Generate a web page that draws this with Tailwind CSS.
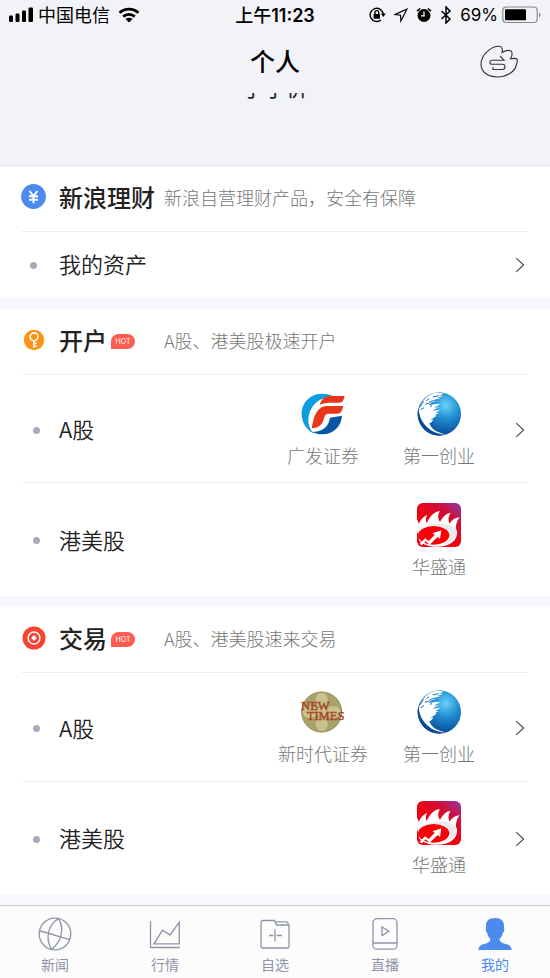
<!DOCTYPE html>
<html lang="zh-CN">
<head>
<meta charset="utf-8">
<meta name="viewport" content="width=device-width, initial-scale=1">
<title>个人</title>
<script src="https://cdn.jsdelivr.net/npm/@tailwindcss/browser@4"></script>
</head>
<body class="flex min-h-screen flex-col bg-[#f7f8fd] font-['Noto_Sans_CJK_SC',sans-serif] text-[#222]">

<!-- Shared symbols -->
<svg class="absolute size-0" aria-hidden="true">
  <symbol id="chevron" viewBox="0 0 10 16"><path d="M1.200 1.200 8.600 8l-7.400 6.800" fill="none" stroke="#444" stroke-width="1.100"/></symbol>
  <symbol id="gf" viewBox="0 0 132 126">
    <path d="M62 2C25 3 0 32 2 66c2 28 18 48 38 56C20 106 16 72 31 47 44 25 64 13 95 9 85 4 74 2 62 2Z" fill="#0a9de0"/>
    <path d="M34 117c12 0 24-3 33-9 12-7 17-20 20-34l36-6c-2 32-26 56-59 56-11 0-21-2-30-7Z" fill="#0757a5"/>
    <path d="M131 9c-4 15-7 20-16 20H86c-15 0-22 3-30 6C61 20 70 10 88 9Z" fill="#e9341c"/>
    <path d="M127 39c-4 16-8 23-18 23H84c-11 0-13 6-16 17-5 18-14 25-36 27 4-26 11-49 24-59 8-7 15-8 25-8Z" fill="#ea371c"/>
  </symbol>
  <symbol id="globe" viewBox="0 0 132 132">
    <circle cx="67" cy="66" r="65" fill="url(#sphere)"/>
    <path d="M70 3C54 1 38 7 24 20 12 32 5 45 6 63c1 28 21 53 49 62 12 4 22 4 31 2-24-4-42-14-49-33 7-2 9-7 12-11-4-1-6 1-9 1 8-7 13-8 19-13l-6-1 12-7-9-1c5-4 10-5 14-9l-14 2-9 2c7-8 14-7 20-11l-15 1c6-6 13-6 18-10l-14-1-20 3c4-9 13-9 19-12l-8-2 24-7-10-1 17-5-11-2 14-5Z" fill="#fff"/>
    <path d="M8 46 20 28m-9 25 10-6M24 37l13-4M28 26l8-6m0 11 14-6M47 15l18-4M39 43l6-2" fill="none" stroke="#1875b8" stroke-width="3"/>
    <path d="M2 58c-3 37 25 72 64 72l20-3C45 128 12 97 6 61Z" fill="#084b9b"/>
  </symbol>
  <symbol id="hst" viewBox="0 0 132 132">
    <rect width="132" height="132" rx="17" fill="url(#flame)"/>
    <path d="M0 50c4 5 4 9 5 13C11 51 18 40 31 36c-6 9-5 18-2 24 9-17 18-33 40-36-8 12-6 24 0 33 7-14 17-26 32-28-8 13-8 22-3 33 6-10 15-18 30-19-7 9-9 15-11 26-1 6 0 9 3 15 3 28-20 45-55 47-25 1-45-5-58-18L0 82Z" fill="#fff"/>
    <path d="M33 68c35-10 70-7 82 9 12 21-11 42-38 46 21-10 26-24 17-35-9-13-37-19-61-20Z" fill="#e9e9ee"/>
    <ellipse cx="50" cy="97" rx="47" ry="28" fill="#f70008"/>
    <path d="m8 122 16-16 11 8 18-18-6-5 26-9-4 26-7-6-24 23-12-10-12 12Z" fill="#fff"/>
  </symbol>
  <defs>
    <radialGradient id="sphere" cx=".65" cy=".3" r=".75"><stop offset="0" stop-color="#6cd0fb"/><stop offset=".4" stop-color="#2190d2"/><stop offset="1" stop-color="#053f91"/></radialGradient>
    <linearGradient id="flame" x1="1" y1="0" x2=".5" y2=".6"><stop offset="0" stop-color="#8b3aa8"/><stop offset=".5" stop-color="#d20d35"/><stop offset="1" stop-color="#f20010"/></linearGradient>
  </defs>
</svg>

<header class="bg-[#f2f3f7] text-black">
  <div class="grid h-[30px] grid-cols-[1fr_auto_1fr] items-center px-2 text-[18px] leading-[26px]">
    <div class="flex items-center">
      <svg class="h-4 w-[26px]" viewBox="0 0 26 16" aria-label="信号"><rect x="1" y="8.500" width="4" height="6.500" rx="1.200"/><rect x="7.500" y="6.500" width="4" height="8.500" rx="1.200"/><rect x="14" y="3.500" width="4" height="11.500" rx="1.200"/><rect x="20.500" y="0.500" width="4.500" height="14.500" rx="1.200"/></svg>
      <span class="ml-1 pb-[3px]">中国电信</span>
      <svg class="ml-2 h-4 w-[22px]" viewBox="0 0 22 16" fill="none" stroke="#000" stroke-width="2.800" aria-label="无线网络"><path d="M1.500 5.800a14 14 0 0 1 19 0M5.200 9.600a8.600 8.600 0 0 1 11.600 0"/><path d="m11 15.500-3.600-3.400a5.300 5.300 0 0 1 7.200 0Z" fill="#000" stroke="none"/></svg>
    </div>
    <div class="pb-px font-medium">上午<span class="font-['Inter'] font-semibold">11:23</span></div>
    <div class="flex items-center justify-end">
      <svg class="h-4 w-[17px]" viewBox="0 0 17 16" fill="none" stroke="#000" stroke-width="1.400" aria-label="方向锁定"><path d="M14.300 7A6.600 6.600 0 1 0 12 13"/><path d="M11.800 6.500h5l-2.500 3.400Z" fill="#000" stroke="none"/><rect x="4.600" y="7" width="6.400" height="4.800" rx=".6" fill="#000" stroke="none"/><path d="M5.900 7V5.500a1.900 1.900 0 0 1 3.800 0V7"/></svg>
      <svg class="ml-2 h-4 w-[14px]" viewBox="0 0 14 16" fill="none" stroke="#000" stroke-width="1.200" aria-label="定位"><path d="M13 2 .9 7.600l5.600.6.400 5.800Z"/></svg>
      <svg class="ml-2 h-4 w-4" viewBox="0 0 16 16" aria-label="闹钟"><circle cx="8" cy="8.500" r="6.500"/><path d="M1 4.200 4.200 1.500M15 4.200l-3.200-2.700" stroke="#000" stroke-width="1.600"/><path d="M8 4.500v4.300H5" fill="none" stroke="#fff" stroke-width="1.300"/></svg>
      <svg class="ml-2 h-[18px] w-3" viewBox="0 0 12 18" fill="none" stroke="#000" stroke-width="1.500" aria-label="蓝牙"><path d="m1.500 5 8.500 8-4 4V1l4 4-8.500 8"/></svg>
      <span class="ml-2 font-['Inter'] text-[17px]">69%</span>
      <svg class="ml-1 h-[18px] w-10" viewBox="0 0 40 18" aria-label="电池"><rect x=".8" y="1" width="34.400" height="15.500" rx="3.500" fill="none" stroke="#888" stroke-width="1.200"/><rect x="3" y="3.200" width="21" height="11" rx="1"/><path d="M37 6.500c2 .8 2 4 0 4.800Z" fill="#888"/></svg>
    </div>
  </div>
  <div class="grid h-[63px] grid-cols-[1fr_auto_1fr] items-center px-8">
    <span></span>
    <h1 class="pb-[3px] text-[25px] leading-[25px] font-medium">个人</h1>
    <button type="button" aria-label="消息" class="justify-self-end">
      <svg class="h-[34px] w-[38px]" viewBox="0 0 38 34" fill="none" stroke="#333" stroke-width="1.100"><path d="M22 7.500c.7-2.200.3-5.500-1.600-6C14 .1 1 7.800 1 19.500 1 27 8 32 17.500 32 26 32 34.500 27 36 21c.5-2.400 2-4 1-6.800-1.200-1.500-4-.6-6.500-.4 1.700-3 2-6.400.3-8.100-2.700-.9-6 .2-8.800 1.800Z"/><path d="m20 11 4 4.200H12c-2.800 0-2.800 4 0 4h10.500c3.300 0 3.300 5.300 0 5.300H13V22"/></svg>
    </button>
  </div>
</header>

<!-- Profile name, scrolled mostly under the header -->
<div class="h-[73px] border-b border-[#e6e7ef] bg-[#f2f3f7]">
  <div class="flex h-[7px] items-end justify-center overflow-hidden text-[22px] leading-[28px]"><p>于于价</p></div>
</div>

<main class="flex flex-1 flex-col gap-[11px]">
  <section class="bg-white px-[22px]">
    <div class="flex h-[66px] items-center border-b border-[#ebecf3] pb-1">
      <svg class="size-6 shrink-0 overflow-visible" viewBox="0 0 24 24" aria-hidden="true"><circle cx="11.500" cy="11.500" r="12.400" fill="#4c8bee"/><path d="m7.500 6 4 4.800 4-4.800m-4 4.800v7.400M7 11.200h9m-9 3.500h9" fill="none" stroke="#fff" stroke-width="1.900"/></svg>
      <div class="ml-[13px] w-[105px] shrink-0"><h2 class="text-[24px] leading-[34px] font-medium">新浪理财</h2></div>
      <p class="text-[18px] leading-[26px] font-light text-[#777]">新浪自营理财产品，安全有保障</p>
    </div>
    <a href="#assets" class="flex h-[66px] items-center">
      <span class="ml-2 mr-[22px] size-[7px] rounded-full bg-[#a6abbb]"></span>
      <span class="flex-1 pb-1 text-[22px] leading-[32px] font-[350]">我的资产</span>
      <svg class="mr-[3px] h-4 w-[10px]"><use href="#chevron"/></svg>
    </a>
  </section>

  <section class="bg-white px-[22px]">
    <div class="flex h-[66px] items-center border-b border-[#ebecf3] pb-1">
      <svg class="size-6 shrink-0" viewBox="0 0 24 24" aria-hidden="true"><circle cx="12" cy="12" r="10.200" fill="#fd9417"/><g fill="none" stroke="#fff" stroke-width="1.600"><circle cx="12" cy="8.800" r="3.900"/><path d="M12 12.700v7M12 15.300h2.800M12 18.200h2.800"/></g></svg>
      <div class="ml-[13px] flex w-[105px] shrink-0 items-center gap-1"><h2 class="text-[24px] leading-[34px] font-medium">开户</h2><span class="mt-1 h-[15px] w-6 rounded-t-full rounded-br-full bg-[#fd5d50] text-center font-['Inter'] text-[7px] leading-[15px] text-white">HOT</span></div>
      <p class="text-[18px] leading-[26px] font-light text-[#777]">A股、港美股极速开户</p>
    </div>
    <a href="#open-a" class="flex h-[108px] items-center border-b border-[#ebecf3] pt-[3px]">
      <span class="ml-[11px] mr-[19px] size-[7px] rounded-full bg-[#a6abbb]"></span>
      <span class="flex-1 pb-1 text-[22px] leading-[32px] font-[350]">A股</span>
      <span class="flex w-[116px] flex-col items-center gap-[6px] text-[18px] leading-[26px] font-light text-[#777]"><svg class="size-[44px]"><use href="#gf"/></svg>广发证券</span>
      <span class="flex w-[116px] flex-col items-center gap-[6px] text-[18px] leading-[26px] font-light text-[#777]"><svg class="size-[44px]"><use href="#globe"/></svg>第一创业</span>
      <svg class="ml-[18px] mr-[3px] h-4 w-[10px]"><use href="#chevron"/></svg>
    </a>
    <a href="#open-hk" class="flex h-[113px] items-center pt-[2px]">
      <span class="ml-[11px] mr-[19px] size-[7px] rounded-full bg-[#a6abbb]"></span>
      <span class="flex-1 pb-1 text-[22px] leading-[32px] font-[350]">港美股</span>
      <span class="mr-[31px] flex w-[116px] flex-col items-center gap-[6px] text-[18px] leading-[26px] font-light text-[#777]"><svg class="size-[44px]"><use href="#hst"/></svg>华盛通</span>
    </a>
  </section>

  <section class="bg-white px-[22px]">
    <div class="flex h-[66px] items-center border-b border-[#ebecf3] pb-1">
      <svg class="size-6 shrink-0" viewBox="0 0 24 24" aria-hidden="true"><circle cx="12" cy="12" r="11.500" fill="#fb4130"/><circle cx="12" cy="12" r="5.900" fill="none" stroke="#fff" stroke-width="1.500"/><path d="m12 9.100 2.900 2.900-2.900 2.900L9.100 12Z" fill="#fff"/></svg>
      <div class="ml-[13px] flex w-[105px] shrink-0 items-center gap-1"><h2 class="text-[24px] leading-[34px] font-medium">交易</h2><span class="mt-1 h-[15px] w-6 rounded-t-full rounded-br-full bg-[#fd5d50] text-center font-['Inter'] text-[7px] leading-[15px] text-white">HOT</span></div>
      <p class="text-[18px] leading-[26px] font-light text-[#777]">A股、港美股速来交易</p>
    </div>
    <a href="#trade-a" class="flex h-[109px] items-center border-b border-[#ebecf3] pt-[2px]">
      <span class="ml-[11px] mr-[19px] size-[7px] rounded-full bg-[#a6abbb]"></span>
      <span class="flex-1 pb-[2px] text-[22px] leading-[32px] font-[350]">A股</span>
      <span class="flex w-[116px] flex-col items-center gap-[6px] text-[18px] leading-[26px] font-light text-[#777]">
        <svg class="size-[44px] overflow-visible" viewBox="0 0 132 132">
          <circle cx="62" cy="66" r="60" fill="#aaa26b"/>
          <g fill="#c9c18e" stroke="#989057" stroke-width="2">
            <ellipse cx="62" cy="30" rx="20" ry="24"/><ellipse cx="62" cy="102" rx="20" ry="24"/>
            <ellipse cx="27" cy="66" rx="24" ry="20"/><ellipse cx="97" cy="66" rx="24" ry="20"/>
            <circle cx="62" cy="66" r="17"/>
          </g>
          <circle cx="62" cy="66" r="60" fill="none" stroke="#938c58" stroke-width="3"/>
          <g fill="#a9401f" stroke="#a9401f" font-family="Liberation Serif, serif" font-weight="400">
            <text x="0" y="60" font-size="38">NEW</text>
            <text x="17" y="90" font-size="38">TIMES</text>
          </g>
        </svg>新时代证券</span>
      <span class="flex w-[116px] flex-col items-center gap-[6px] text-[18px] leading-[26px] font-light text-[#777]"><svg class="size-[44px]"><use href="#globe"/></svg>第一创业</span>
      <svg class="ml-[18px] mr-[3px] h-4 w-[10px]"><use href="#chevron"/></svg>
    </a>
    <a href="#trade-hk" class="flex h-[112px] items-center pt-[2px]">
      <span class="ml-[11px] mr-[19px] size-[7px] rounded-full bg-[#a6abbb]"></span>
      <span class="flex-1 pb-1 text-[22px] leading-[32px] font-[350]">港美股</span>
      <span class="flex w-[116px] flex-col items-center gap-[6px] text-[18px] leading-[26px] font-light text-[#777]"><svg class="size-[44px]"><use href="#hst"/></svg>华盛通</span>
      <svg class="ml-[18px] mr-[3px] h-4 w-[10px]"><use href="#chevron"/></svg>
    </a>
  </section>
</main>

<nav class="sticky bottom-0 grid h-[73px] grid-cols-5 border-t border-[#c6cac8] bg-[#fcfcfd] pt-[11px] text-[14px] leading-[20px] text-[#8f95a8]">
  <a href="#news" class="flex flex-col items-center gap-[3px]">
    <svg class="size-[34px]" viewBox="0 0 34 34" fill="none" stroke="currentColor" stroke-width="1.300"><circle cx="17" cy="17" r="15.800"/><path d="M2 14c10 2.500 20 6 29.500 8.500M20.500 1.600C11 7 6.500 20 13.500 32.400M20.500 1.600c6 9 3.500 23-7 30.800"/></svg>新闻</a>
  <a href="#market" class="flex flex-col items-center gap-[3px]">
    <svg class="size-[34px]" viewBox="0 0 34 34" fill="none" stroke="currentColor" stroke-width="1.300"><path d="M2.500 4v26.500H32M6 26.800l8.500-13.600 7.500 4.800 9.300-12.800v21.600Z"/></svg>行情</a>
  <a href="#watch" class="flex flex-col items-center gap-[3px]">
    <svg class="size-[34px]" viewBox="0 0 34 34" fill="none" stroke="currentColor" stroke-width="1.300"><path d="M5 3.500h11.500l2 4.500H31v21.500a1.500 1.500 0 0 1-1.500 1.500H5a2 2 0 0 1-2-2v-23.500a2 2 0 0 1 2-2ZM17 4.800h11.500a1.500 1.500 0 0 1 1.500 1.500V8M17 12.500v12M11 18.500h4.500m3 0H24"/></svg>自选</a>
  <a href="#live" class="flex flex-col items-center gap-[3px]">
    <svg class="size-[34px]" viewBox="0 0 34 34" fill="none" stroke="currentColor" stroke-width="1.300"><rect x="5" y="1.700" width="24" height="30.500" rx="4"/><path d="M5 26h24M14 10v8.600l7-4.300Z"/></svg>直播</a>
  <a href="#me" aria-current="page" class="flex flex-col items-center gap-[3px] text-[#4c8bee]">
    <svg class="size-[34px]" viewBox="0 0 34 34" fill="currentColor"><path d="M17 1c-6.500 0-9.500 3.500-9 9-.2 1.400-.8 4.800 1.200 5.900.6 3 1.900 4.700 3.300 6.100-.5 3.600-3.500 4.300-6.500 5.100C2.500 28.100.8 29.500.3 33h33.400c-.5-3.500-2.200-4.900-5.700-5.900-3-.8-6-1.500-6.500-5.100 1.400-1.400 2.700-3.100 3.300-6.100 2-1.100 1.400-4.500 1.200-5.900.5-5.500-2.500-9-9-9Z"/></svg>我的</a>
</nav>
</body>
</html>
